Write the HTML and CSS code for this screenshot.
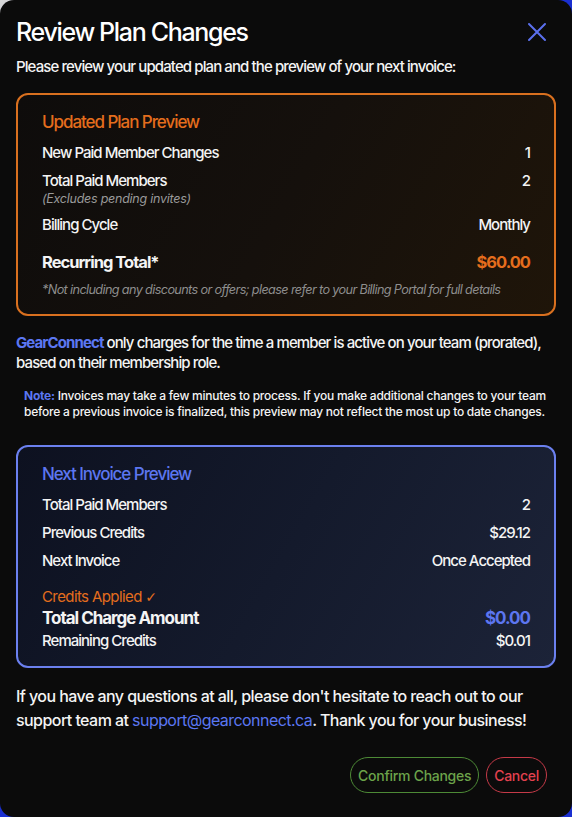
FILE: index.html
```html
<!DOCTYPE html>
<html lang="en">
<head>
<meta charset="utf-8">
<title>Review Plan Changes</title>
<link rel="stylesheet" href="styles.css">
</head>
<body>
<div class="modal">
  <div class="header">
    <h1 class="title">Review Plan Changes</h1>
    <button class="close" aria-label="Close">
      <svg width="20" height="20" viewBox="0 0 20 20"><path d="M2 2 L18 18 M18 2 L2 18" stroke="#5b70ee" stroke-width="2" stroke-linecap="round" fill="none"/></svg>
    </button>
  </div>
  <p class="subtitle">Please review your updated plan and the preview of your next invoice:</p>

  <section class="card card-orange">
    <h2 class="card-title orange">Updated Plan Preview</h2>
    <div class="row first"><span>New Paid Member Changes</span><span>1</span></div>
    <div class="row"><span>Total Paid Members</span><span>2</span></div>
    <div class="subnote">(Excludes pending invites)</div>
    <div class="row"><span>Billing Cycle</span><span>Monthly</span></div>
    <div class="row total"><span>Recurring Total*</span><span class="orange">$60.00</span></div>
    <div class="footnote">*Not including any discounts or offers; please refer to your Billing Portal for full details</div>
  </section>

  <p class="info"><span class="brand">GearConnect</span> only charges for the time a member is active on your team (prorated), based on their membership role.</p>
  <p class="note"><span class="note-label">Note:</span> Invoices may take a few minutes to process. If you make additional changes to your team before a previous invoice is finalized, this preview may not reflect the most up to date changes.</p>

  <section class="card card-blue">
    <h2 class="card-title blue">Next Invoice Preview</h2>
    <div class="row first"><span>Total Paid Members</span><span>2</span></div>
    <div class="row"><span>Previous Credits</span><span>$29.12</span></div>
    <div class="row"><span>Next Invoice</span><span>Once Accepted</span></div>
    <div class="applied orange">Credits Applied <span class="check">✓</span></div>
    <div class="row charge"><span>Total Charge Amount</span><span class="blue">$0.00</span></div>
    <div class="row remaining"><span>Remaining Credits</span><span>$0.01</span></div>
  </section>

  <p class="closing">If you have any questions at all, please don't hesitate to reach out to our support team at <a class="mail" href="#">support@gearconnect.ca</a>. Thank you for your business!</p>

  <div class="actions">
    <button class="btn btn-confirm">Confirm Changes</button>
    <button class="btn btn-cancel">Cancel</button>
  </div>
</div>
</body>
</html>
```

FILE: styles.css
```css
html, body {
  margin: 0;
  padding: 0;
}
body {
  width: 572px;
  height: 817px;
  background: linear-gradient(135deg, #d8d8d8 0%, #1a2fd0 30%, #1a2fd0 100%);
  font-family: Inter, "Noto Sans", sans-serif;
  color: #f4f4f4;
  overflow: hidden;
}
.modal {
  box-sizing: border-box;
  width: 572px;
  height: 817px;
  background: #0b0b0b;
  border-radius: 14px;
  padding: 16px 16px 0 16px;
  letter-spacing: -0.06em;
}
.header {
  display: flex;
  justify-content: space-between;
  align-items: center;
  height: 32px;
}
.title {
  margin: 0;
  font-size: 25px;
  font-weight: 500;
  line-height: 32px;
  color: #ffffff;
  letter-spacing: -0.053em;
}
.close {
  background: none;
  border: 0;
  padding: 0;
  margin-right: 9px;
  width: 20px;
  height: 20px;
  display: flex;
}
.subtitle {
  margin: 9px 0 0 0;
  font-size: 15px;
  line-height: 20px;
  font-weight: 500;
  letter-spacing: -0.06em;
}
.card {
  margin-top: 16px;
  border-radius: 12px;
  border: 2px solid;
  padding: 16px 24px 16px 24px;
}
.card-orange {
  border-color: #d9701f;
  background: linear-gradient(120deg, #0e0c0b 0%, #15100c 50%, #1f1509 100%);
}
.card-blue {
  margin-top: 25px;
  border-color: #6b80ef;
  background: linear-gradient(120deg, #0d1120 0%, #141a2c 50%, #1c2338 100%);
  padding-bottom: 15px;
}
.card-title {
  margin: 0;
  font-size: 17px;
  line-height: 22px;
  font-weight: 500;
  letter-spacing: -0.062em;
}
.orange { color: #e46d1d; }
.blue { color: #5c76f0; }
.row {
  display: flex;
  justify-content: space-between;
  font-size: 15px;
  line-height: 20px;
  font-weight: 500;
  margin-top: 8px;
  letter-spacing: -0.065em;
}
.row.first { margin-top: 10px; }
.subnote {
  font-size: 12.5px;
  line-height: 16px;
  font-style: italic;
  color: #9a9a9a;
  letter-spacing: -0.02em;
}
.total {
  margin-top: 15px;
  font-size: 16.5px;
  line-height: 24px;
  font-weight: 700;
  letter-spacing: -0.06em;
}
.footnote {
  margin-top: 8px;
  font-size: 12.7px;
  line-height: 16px;
  font-style: italic;
  color: #8e8e8e;
  letter-spacing: -0.05em;
}
.info {
  margin: 17px 0 0 0;
  font-size: 15px;
  line-height: 19.5px;
  font-weight: 500;
  letter-spacing: -0.06em;
}
.brand {
  color: #5b77f2;
  font-weight: 700;
}
.note {
  margin: 16px 0 0 0;
  padding: 0 8px;
  font-size: 12px;
  line-height: 16px;
  font-weight: 500;
  letter-spacing: -0.02em;
}
.note-label {
  color: #5b77f2;
  font-weight: 700;
}
.applied {
  margin-top: 16px;
  font-size: 15px;
  line-height: 20px;
  letter-spacing: -0.04em;
}
.check {
  font-family: "DejaVu Sans", sans-serif;
  font-size: 14px;
}
.charge {
  margin-top: 0;
  font-size: 17px;
  line-height: 22px;
  font-weight: 700;
  letter-spacing: -0.06em;
}
.remaining {
  margin-top: 2px;
}
.closing {
  margin: 16px 0 0 0;
  font-size: 16px;
  line-height: 24px;
  font-weight: 500;
  letter-spacing: -0.035em;
}
.mail {
  color: #5b77f2;
  text-decoration: none;
  font-weight: 400;
}
.actions {
  display: flex;
  justify-content: flex-end;
  gap: 7px;
  margin-top: 25px;
  padding-right: 9px;
}
.btn {
  font-family: inherit;
  letter-spacing: -0.02em;
  background: transparent;
  height: 36px;
  border-radius: 18px;
  border: 1px solid;
  font-size: 14px;
  font-weight: 500;
  padding: 0 7px;
}
.btn-confirm {
  border-color: #4d8a36;
  color: #6ca34a;
}
.btn-cancel {
  border-color: #c53a48;
  color: #e2414f;
}
```
